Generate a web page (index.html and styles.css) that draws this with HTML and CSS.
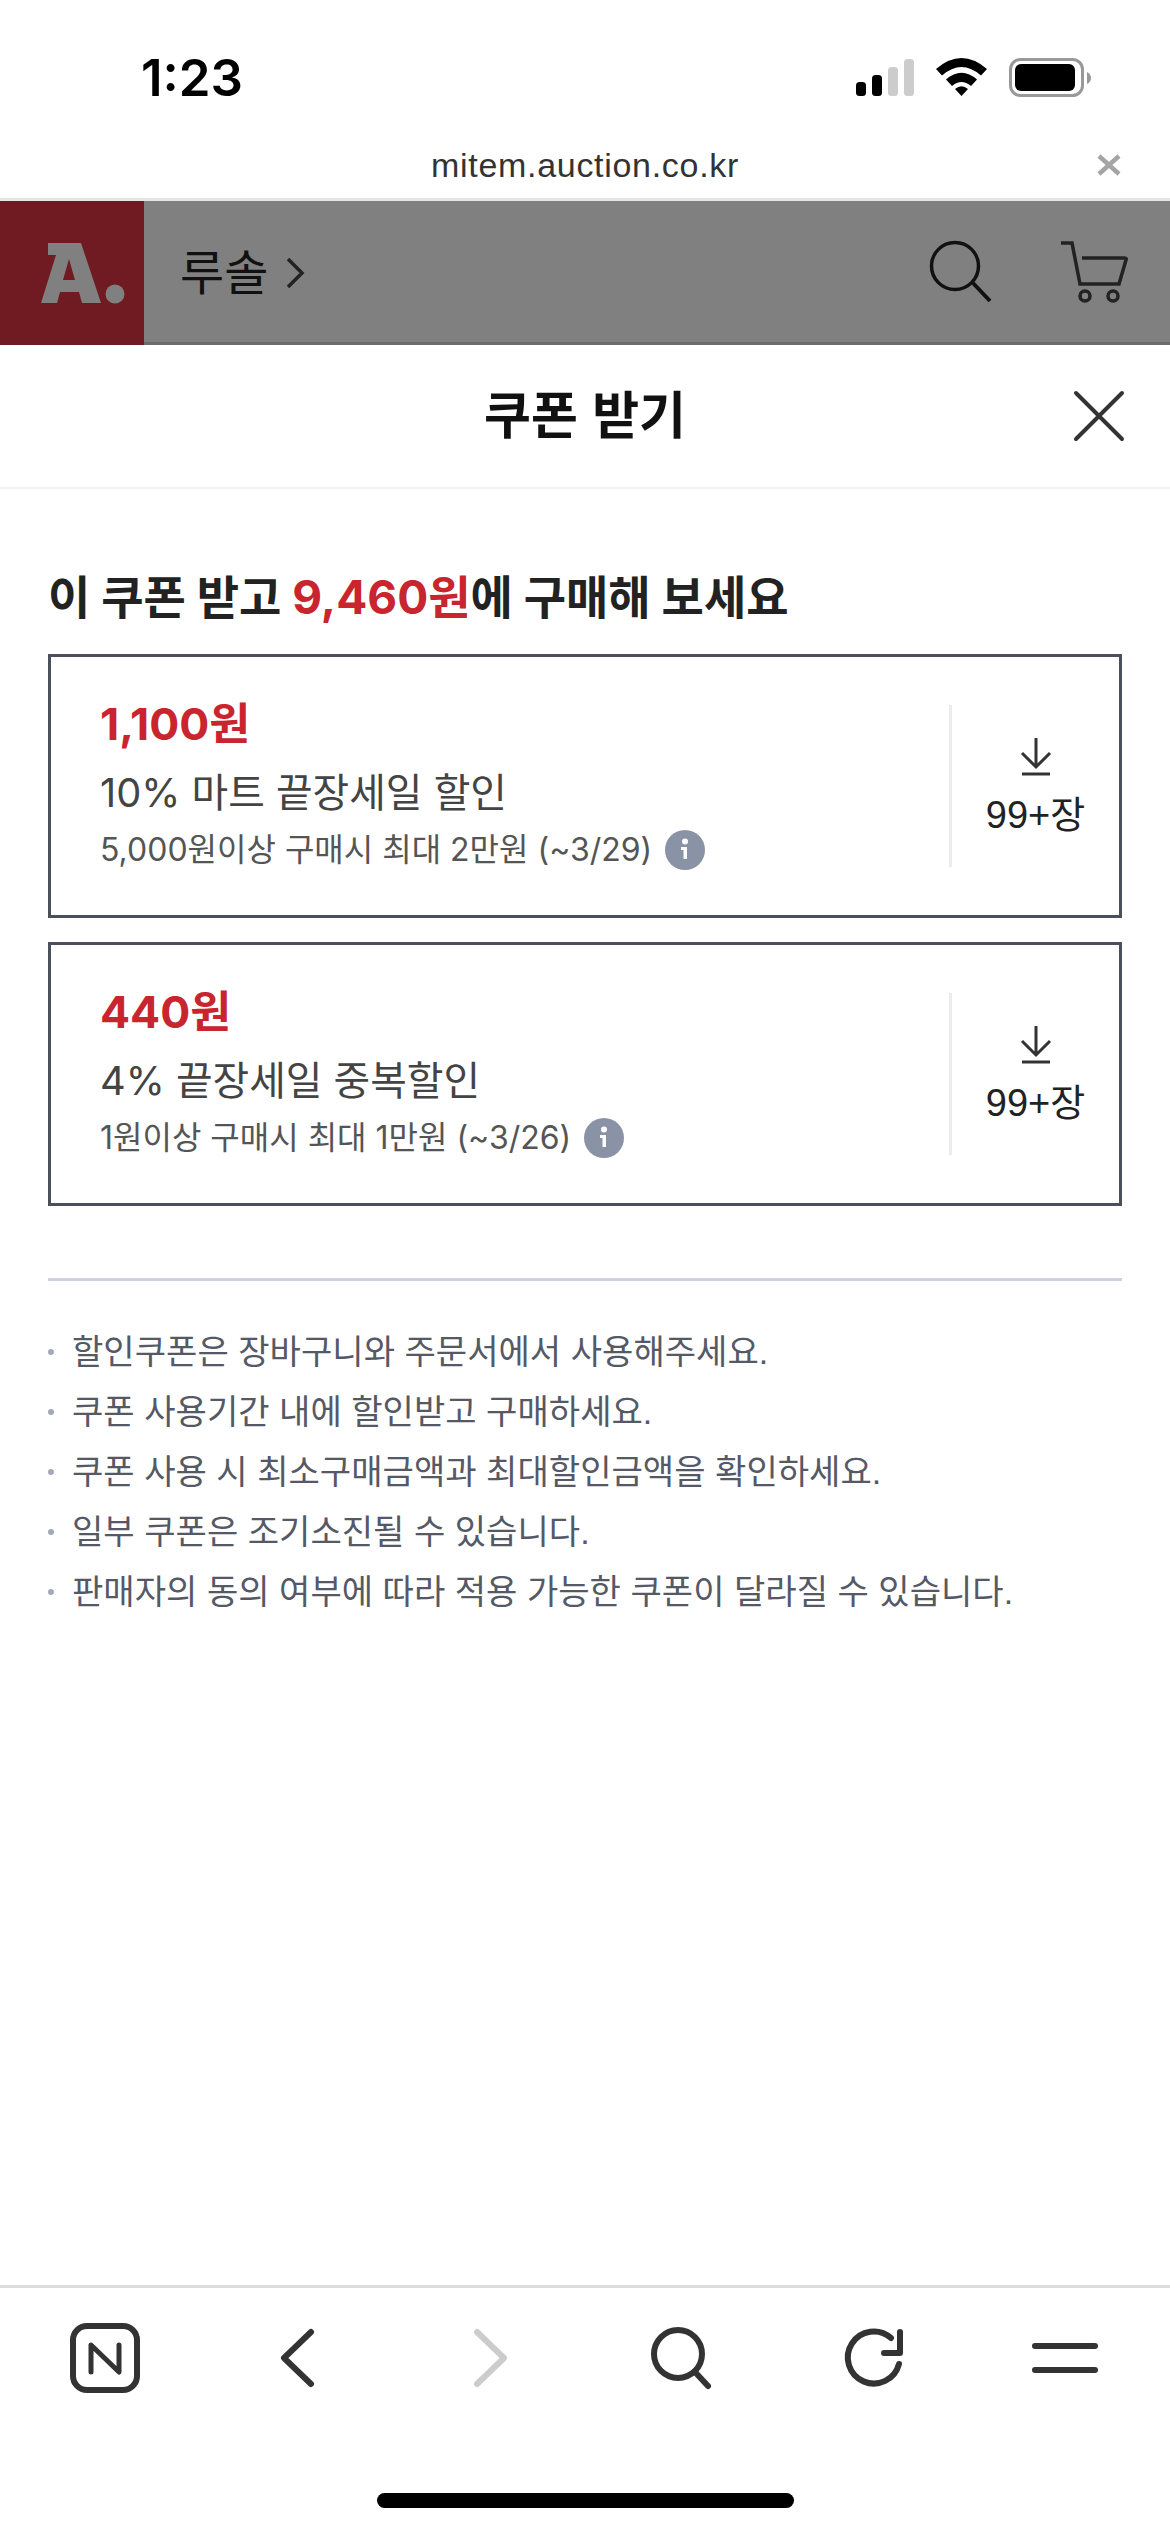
FILE: index.html
```html
<!DOCTYPE html>
<html lang="ko">
<head>
<meta charset="utf-8">
<title>쿠폰 받기</title>
<link rel="stylesheet" href="styles.css">
</head>
<body>
<div class="page">
  <div class="status">
    <span class="time">1:23</span>
    <svg class="status-icons" width="235" height="40" viewBox="856 58 235 40">
      <rect x="856" y="82" width="10" height="14" rx="3.5" fill="#000"/>
      <rect x="872" y="75" width="10" height="21" rx="3.5" fill="#000"/>
      <rect x="888" y="67" width="10" height="29" rx="3.5" fill="#ccc"/>
      <rect x="904" y="59" width="10" height="37" rx="3.5" fill="#ccc"/>
      <path d="M936 69 Q961.500 47 987 69 L981 75.500 Q961.500 58.500 942 75.500Z M946 79.500 Q961.500 66 977 79.500 L971 86 Q961.500 78 952 86Z M955 89 Q961.500 83.500 968 89 L961.500 96Z" fill="#000"/>
      <rect x="1010.500" y="59.500" width="72" height="36" rx="10" fill="none" stroke="#999" stroke-width="3"/>
      <rect x="1015" y="64" width="60" height="27" rx="6" fill="#000"/>
      <path d="M1087 72 Q1091 74 1091 78 Q1091 82 1087 84Z" fill="#999"/>
    </svg>
  </div>
  <div class="urlbar">
    <span class="url">mitem.auction.co.kr</span>
    <svg class="url-close" width="24" height="24" viewBox="0 0 24 24"><path d="M2 3 L22 21 M22 3 L2 21" stroke="#a5a5a5" stroke-width="4.500"/></svg>
  </div>
  <header class="topbar">
    <div class="logo">
      <svg width="144" height="144" viewBox="0 0 144 144">
        <path d="M48 42 H81 L101 102 H82 L79 91 H60 L57 102 H41 L56 54 H48Z M63 79 H75 L69 58Z" fill="#808080" fill-rule="evenodd"/>
        <circle cx="115" cy="93" r="9.500" fill="#808080"/>
      </svg>
    </div>
    <span class="crumb">루솔</span>
    <svg class="crumb-chevron" width="20" height="34" viewBox="0 0 20 34"><path d="M3 3 L17 17 L3 31" fill="none" stroke="#222" stroke-width="3.500"/></svg>
    <svg class="top-search" width="64" height="64" viewBox="0 0 64 64"><circle cx="27" cy="26" r="23.500" fill="none" stroke="#111" stroke-width="3.500"/><path d="M45 43 L62 61" stroke="#111" stroke-width="4"/></svg>
    <svg class="top-cart" width="76" height="76" viewBox="0 0 76 76"><path d="M7 9 H18 L26 50 H65 L72 26 Q73 24 70 24 H28" fill="none" stroke="#222" stroke-width="3.500"/><circle cx="31" cy="62" r="5" fill="none" stroke="#222" stroke-width="3.500"/><circle cx="59" cy="62" r="5" fill="none" stroke="#222" stroke-width="3.500"/></svg>
  </header>
  <div class="modal-title">
    <span></span>
    <h1>쿠폰 받기</h1>
    <svg class="modal-close" width="56" height="56" viewBox="0 0 56 56"><path d="M5 5 L51 51 M51 5 L5 51" stroke="#333" stroke-width="4" stroke-linecap="round"/></svg>
  </div>
  <main class="content">
    <h2 class="headline">이 쿠폰 받고 <em>9,460원</em>에 구매해 보세요</h2>
    <article class="coupon">
      <div class="coupon-info">
        <div class="amount">1,100원</div>
        <div class="name">10% 마트 끝장세일 할인</div>
        <div class="cond">5,000원이상 구매시 최대 2만원 (~3/29)
          <svg class="info" width="40" height="40" viewBox="0 0 40 40"><circle cx="20" cy="20" r="20" fill="#8a92a5"/><circle cx="20" cy="11.500" r="3" fill="#fff"/><path d="M16 17 H22 V29 H18.500 V20 H16Z" fill="#fff"/></svg>
        </div>
      </div>
      <div class="coupon-get">
        <svg width="40" height="40" viewBox="0 0 40 40"><path d="M20 2 V30 M6 17 L20 31 L34 17" fill="none" stroke="#333" stroke-width="3"/><path d="M6 38 H34" stroke="#333" stroke-width="3"/></svg>
        <span class="count">99+장</span>
      </div>
    </article>
    <article class="coupon">
      <div class="coupon-info">
        <div class="amount">440원</div>
        <div class="name">4% 끝장세일 중복할인</div>
        <div class="cond">1원이상 구매시 최대 1만원 (~3/26)
          <svg class="info" width="40" height="40" viewBox="0 0 40 40"><circle cx="20" cy="20" r="20" fill="#8a92a5"/><circle cx="20" cy="11.500" r="3" fill="#fff"/><path d="M16 17 H22 V29 H18.500 V20 H16Z" fill="#fff"/></svg>
        </div>
      </div>
      <div class="coupon-get">
        <svg width="40" height="40" viewBox="0 0 40 40"><path d="M20 2 V30 M6 17 L20 31 L34 17" fill="none" stroke="#333" stroke-width="3"/><path d="M6 38 H34" stroke="#333" stroke-width="3"/></svg>
        <span class="count">99+장</span>
      </div>
    </article>
    <hr class="rule">
    <ul class="notes">
      <li>할인쿠폰은 장바구니와 주문서에서 사용해주세요.</li>
      <li>쿠폰 사용기간 내에 할인받고 구매하세요.</li>
      <li>쿠폰 사용 시 최소구매금액과 최대할인금액을 확인하세요.</li>
      <li>일부 쿠폰은 조기소진될 수 있습니다.</li>
      <li>판매자의 동의 여부에 따라 적용 가능한 쿠폰이 달라질 수 있습니다.</li>
    </ul>
  </main>
  <footer class="browser">
    <nav class="browser-nav">
      <svg width="80" height="80" viewBox="0 0 80 80"><rect x="8" y="8" width="64" height="64" rx="14" fill="none" stroke="#333" stroke-width="6"/><path d="M26 54 V27 L54 54 V27" fill="none" stroke="#333" stroke-width="5" stroke-linecap="round" stroke-linejoin="round"/></svg>
      <svg width="80" height="80" viewBox="0 0 80 80"><path d="M54 14 L27 40 L54 66" fill="none" stroke="#333" stroke-width="6" stroke-linecap="round" stroke-linejoin="round"/></svg>
      <svg width="80" height="80" viewBox="0 0 80 80"><path d="M28 14 L55 40 L28 66" fill="none" stroke="#ccc" stroke-width="6" stroke-linecap="round" stroke-linejoin="round"/></svg>
      <svg width="80" height="80" viewBox="0 0 80 80"><circle cx="37" cy="36" r="24" fill="none" stroke="#333" stroke-width="6"/><path d="M54 54 L67 68" stroke="#333" stroke-width="6" stroke-linecap="round"/></svg>
      <svg width="80" height="80" viewBox="0 0 80 80"><path d="M66 46 A26 26 0 1 1 58 20" fill="none" stroke="#333" stroke-width="6" stroke-linecap="round"/><path d="M67 14 V35 H51" fill="none" stroke="#333" stroke-width="6" stroke-linecap="round" stroke-linejoin="round"/></svg>
      <svg width="80" height="80" viewBox="0 0 80 80"><path d="M10 28 H70 M10 52 H70" stroke="#333" stroke-width="6" stroke-linecap="round"/></svg>
    </nav>
    <div class="home-indicator"></div>
  </footer>
</div>
</body>
</html>
```
FILE: styles.css
```css
* { box-sizing: border-box; }
html, body { margin: 0; padding: 0; background: #fff; }
body { font-family: "Liberation Sans", "Noto Sans CJK KR", sans-serif; color: #222; }
.page { width: 1170px; height: 2532px; display: flex; flex-direction: column; overflow: hidden; }

.status { height: 135px; display: flex; align-items: flex-start; justify-content: space-between; padding: 58px 79px 0 141px; }
.time { font-family: Inter, "Liberation Sans", sans-serif; font-size: 51px; line-height: 40px; font-weight: 600; color: #000; }

.urlbar { height: 63px; display: grid; grid-template-columns: 1fr auto 1fr; align-items: center; padding-bottom: 4px; }
.url { font-size: 34px; line-height: 40px; color: #333; grid-column: 2; letter-spacing: 0.7px; }
.url-close { justify-self: end; margin-right: 49px; }

.topbar { height: 147px; background: #808080; border-top: 3px solid #e5e5e5; border-bottom: 3px solid #6c6c6c; display: flex; align-items: center; padding-right: 40px; color: #111; }
.logo { width: 144px; height: 144px; background: #701a21; flex: none; margin-bottom: -3px; }
.crumb { font-family: "Noto Sans CJK KR", sans-serif; font-size: 48px; line-height: 60px; margin: -6px 0 0 36px; color: #111; }
.crumb-chevron { margin-left: 17px; margin-top: 2px; }
.top-search { margin-left: auto; }
.top-cart { margin-left: 62px; }

.modal-title { height: 144px; display: grid; grid-template-columns: 1fr auto 1fr; align-items: center; border-bottom: 2px solid #f2f2f2; }
.modal-title h1 { margin: -8px 0 0; font-family: "Noto Sans CJK KR", sans-serif; font-size: 51px; line-height: 70px; font-weight: 700; color: #111; grid-column: 2; }
.modal-close { justify-self: end; margin-right: 43px; }

.content { flex: 1; padding: 78px 48px 0; }
.headline { margin: 0 0 27px; font-family: Inter, "Noto Sans CJK KR", sans-serif; font-size: 46px; line-height: 60px; font-weight: 700; color: #222; }
.headline em { font-style: normal; color: #c9252f; }

.coupon { height: 264px; border: 3px solid #4b4f5c; display: flex; margin-bottom: 24px; align-items: center; }
.coupon-info { flex: 1; padding: 0 0 6px 49px; font-family: Inter, "Noto Sans CJK KR", sans-serif; }
.amount { font-size: 44.5px; line-height: 60px; margin: -3px 0 3px; font-weight: 700; color: #c9252f; }
.name { font-size: 39.8px; line-height: 74px; margin-top: -1px; color: #444; }
.cond { font-size: 32px; line-height: 40px; color: #555; display: flex; align-items: center; gap: 13px; }
.info { flex: none; }
.coupon-get { width: 170px; height: 162px; border-left: 3px solid #ececec; display: flex; flex-direction: column; align-items: center; justify-content: center; gap: 16px; }
.count { font-size: 38px; line-height: 44px; color: #222; position: relative; top: 1px; }

.rule { margin: 72px 0 41px; border: 0; height: 3px; background: #cdd1e0; }
.notes { margin: 0; padding: 0; list-style: none; }
.notes li { display: flex; align-items: center; gap: 18px; font-size: 34.1px; line-height: 60px; color: #555966; }
.notes li::before { content: ""; width: 6px; height: 6px; border-radius: 50%; background: #a3a8b6; flex: none; }

.browser { height: 247px; border-top: 3px solid #dcdcdc; }
.browser-nav { display: grid; grid-template-columns: repeat(6, 192px); justify-items: center; padding: 30px 0 0 9px; }
.home-indicator { width: 417px; height: 15px; border-radius: 8px; background: #000; margin: 95px auto 0; }
```
